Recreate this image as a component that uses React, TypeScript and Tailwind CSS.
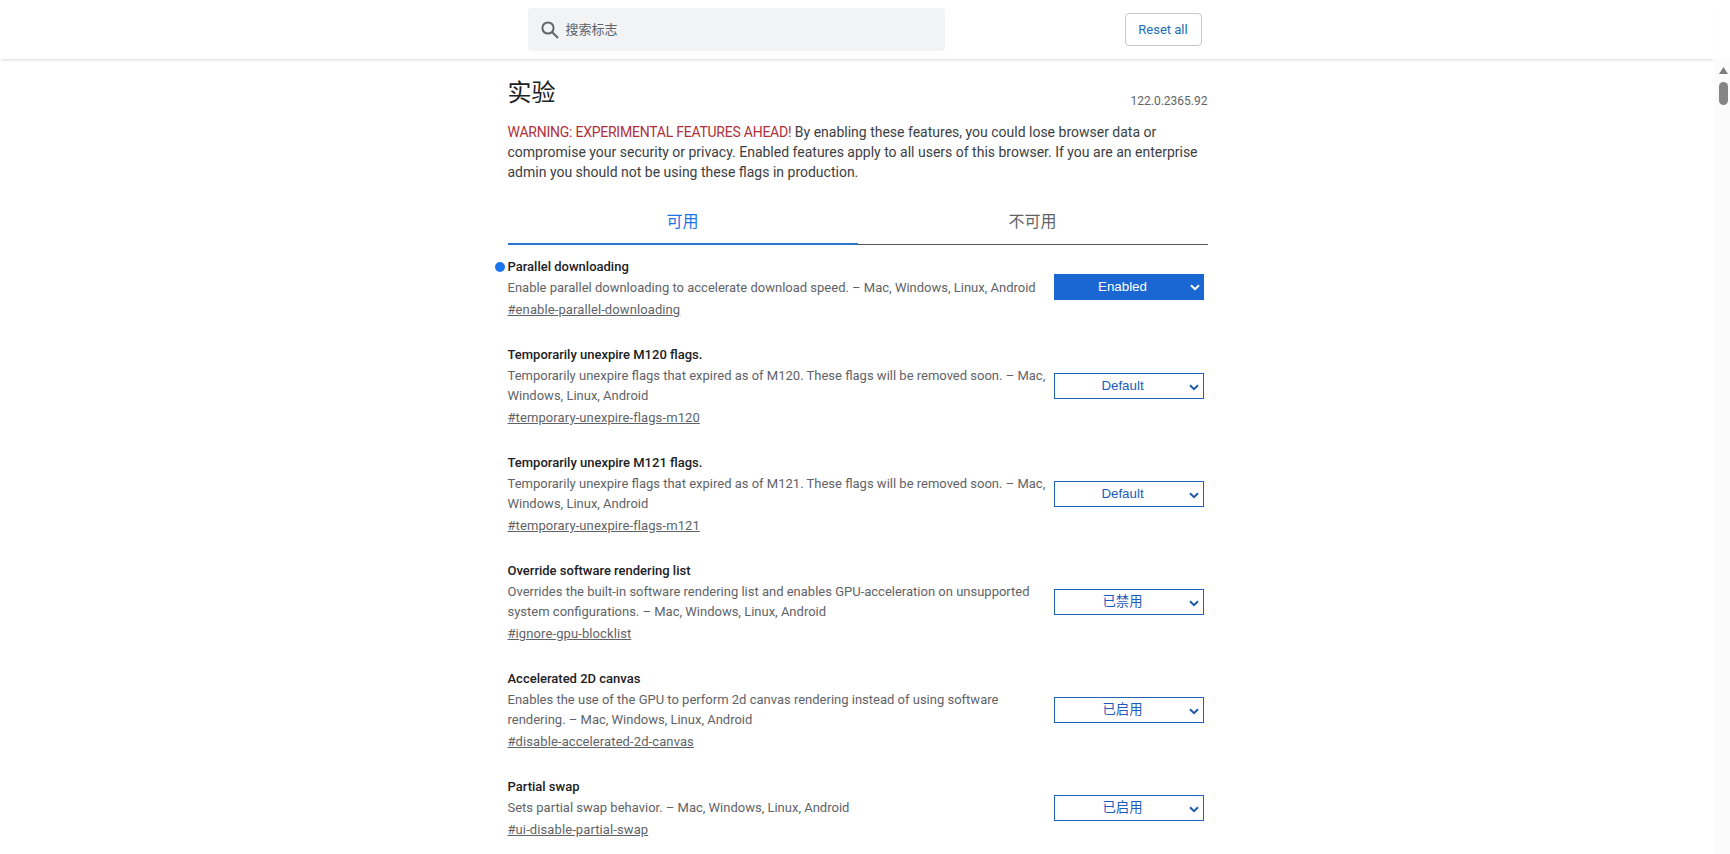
const font = { fontFamily: 'Roboto, "Noto Sans CJK SC", sans-serif' };

const flags = [
  {
    title: 'Parallel downloading',
    desc: 'Enable parallel downloading to accelerate download speed. – Mac, Windows, Linux, Android',
    link: '#enable-parallel-downloading',
    value: 'Enabled',
    changed: true,
  },
  {
    title: 'Temporarily unexpire M120 flags.',
    desc: 'Temporarily unexpire flags that expired as of M120. These flags will be removed soon. – Mac, Windows, Linux, Android',
    link: '#temporary-unexpire-flags-m120',
    value: 'Default',
  },
  {
    title: 'Temporarily unexpire M121 flags.',
    desc: 'Temporarily unexpire flags that expired as of M121. These flags will be removed soon. – Mac, Windows, Linux, Android',
    link: '#temporary-unexpire-flags-m121',
    value: 'Default',
  },
  {
    title: 'Override software rendering list',
    desc: 'Overrides the built-in software rendering list and enables GPU-acceleration on unsupported system configurations. – Mac, Windows, Linux, Android',
    link: '#ignore-gpu-blocklist',
    value: '已禁用',
  },
  {
    title: 'Accelerated 2D canvas',
    desc: 'Enables the use of the GPU to perform 2d canvas rendering instead of using software rendering. – Mac, Windows, Linux, Android',
    link: '#disable-accelerated-2d-canvas',
    value: '已启用',
  },
  {
    title: 'Partial swap',
    desc: 'Sets partial swap behavior. – Mac, Windows, Linux, Android',
    link: '#ui-disable-partial-swap',
    value: '已启用',
  },
];

function Chevron({ className }: { className: string }) {
  return (
    <svg viewBox="0 0 10 7" className={className} fill="none" stroke="currentColor" strokeWidth="2">
      <path d="M1 1.2 L5 5.2 L9 1.2" />
    </svg>
  );
}

function FlagSelect({ value, changed }: { value: string; changed?: boolean }) {
  return (
    <div
      className={`relative flex h-[26px] w-[150px] shrink-0 items-center justify-center pr-3 font-['Liberation_Sans','Noto_Sans_CJK_SC',sans-serif] text-[13.33px] ${
        changed ? 'mb-[2px] bg-[#1a66d2] text-white' : 'border border-[#1f63b5] bg-white text-[#1a5bbd]'
      }`}
    >
      {value}
      <Chevron className={`absolute right-[4px] top-[10px] h-[7px] w-[10px] ${changed ? 'text-white' : 'text-[#1f5aa8]'}`} />
    </div>
  );
}

function FlagRow({ flag }: { flag: (typeof flags)[number] }) {
  return (
    <div className="relative flex items-center justify-between pb-[26px] pr-1">
      {flag.changed && <span className="absolute left-[-13px] top-[5px] h-[10px] w-[10px] rounded-full bg-[#1a73e8]" />}
      <div className="w-[540px]">
        <div className="h-5 text-[13px] font-medium leading-5 text-[#202124]">{flag.title}</div>
        <p className="mt-px text-[13px] leading-5 text-[#5f6368]">{flag.desc}</p>
        <a className="mt-[2px] block text-[13px] leading-[19px] tracking-[0.1px] text-[#5f6368] underline">{flag.link}</a>
      </div>
      <FlagSelect value={flag.value} changed={flag.changed} />
    </div>
  );
}

export default function App() {
  return (
    <div className="flex h-[854px] overflow-hidden bg-white" style={font}>
      <div className="min-w-0 flex-1">
        <header className="h-[59px] bg-white shadow-[0_3px_3px_-2px_rgba(60,64,67,0.2)]">
          <div className="mx-auto flex w-[700px] items-start justify-between pl-5 pr-[6px] pt-2">
            <div className="flex h-[43px] w-[417px] items-center rounded bg-[#f1f3f4] pl-[12px]">
              <svg viewBox="0 0 20 20" className="h-[20px] w-[20px] text-[#5f6368]" fill="none" stroke="currentColor" strokeWidth="2">
                <circle cx="8" cy="8" r="5.6" />
                <path d="M12 12 L18 18" />
              </svg>
              <span className="ml-[6px] text-[13px] text-[#5f6368]">搜索标志</span>
            </div>
            <button className="mt-[5px] flex h-[33px] w-[77px] items-center justify-center rounded border border-[#c4c7cc] bg-white text-[13px] text-[#1a6fb5]">
              Reset all
            </button>
          </div>
        </header>
        <main className="mx-auto w-[700px]">
          <div className="flex items-end justify-between pt-[18px]">
            <h1 className="text-[24px] leading-8 text-[#202124]">实验</h1>
            <span className="text-[12px] leading-4 text-[#5f6368]">122.0.2365.92</span>
          </div>
          <p className="mt-[13px] text-[14px] leading-5 text-[#3c4043]">
            <span className="tracking-[-0.24px] text-[#b0303a]">WARNING: EXPERIMENTAL FEATURES AHEAD!</span> By enabling these features, you could lose browser data or compromise your security or privacy. Enabled features apply to all users of this browser. If you are an enterprise admin you should not be using these flags in production.
          </p>
          <div className="mt-[19px] grid grid-cols-2 text-center text-[16px]">
            <div className="h-[44px] border-b-2 border-[#2a74c9] pt-[9px] leading-6 text-[#1a73e8]">可用</div>
            <div className="h-[44px] pt-[9px] leading-6 text-[#5f6368]">
              不可用
              <div className="mt-[10px] h-px bg-[#505357]" />
            </div>
          </div>
          <div className="pt-3">
            {flags.map((flag) => (
              <FlagRow key={flag.link} flag={flag} />
            ))}
          </div>
        </main>
      </div>
      <div className="mt-[59px] flex w-[15px] shrink-0 flex-col items-center bg-[#fbfbfb] pl-px pt-[8px]">
        <svg viewBox="0 0 9 7" className="h-[7px] w-[9px] text-[#7d7d7d]" fill="currentColor">
          <path d="M4.5 0 L9 7 L0 7 Z" />
        </svg>
        <div className="mt-[8px] h-[23px] w-[9px] rounded-full bg-[#858585]" />
      </div>
    </div>
  );
}
